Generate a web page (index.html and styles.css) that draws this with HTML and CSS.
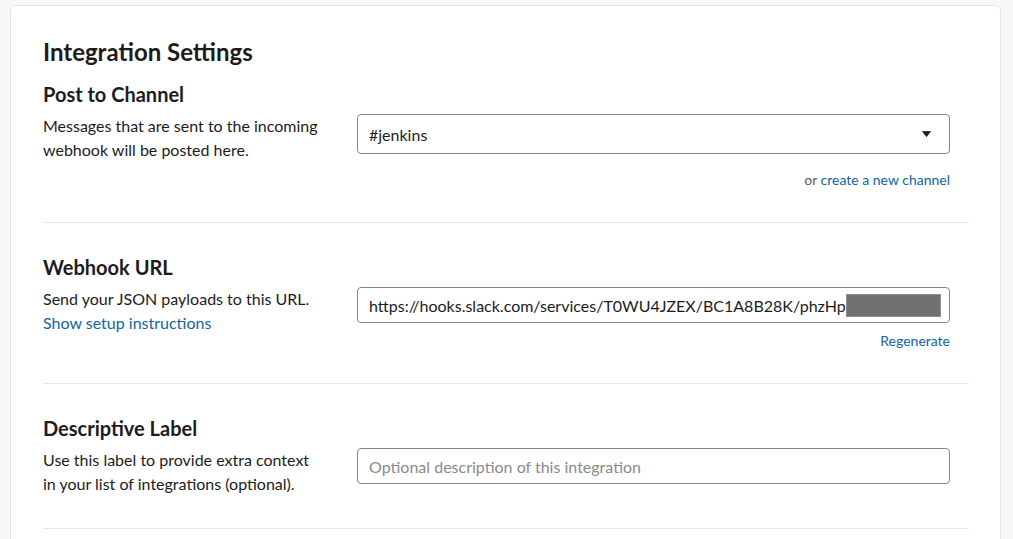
FILE: index.html
```html
<!DOCTYPE html>
<html>
<head>
<meta charset="utf-8">
<link rel="stylesheet" href="styles.css">
</head>
<body>
<div class="card">
  <h1 class="title">Integration Settings</h1>

  <section class="section first">
    <h2 class="label">Post to Channel</h2>
    <div class="row">
      <p class="desc">Messages that are sent to the incoming webhook will be posted here.</p>
      <div class="control">
        <div class="field select">
          <span>#jenkins</span>
          <svg class="caret" width="9" height="6" viewBox="0 0 9 6"><path d="M0.3 0.3H8.7L4.5 5.7Z" fill="#1d1c1d" stroke="#1d1c1d" stroke-width="0.6" stroke-linejoin="round"/></svg>
        </div>
        <div class="helper helper-select">or <a href="#">create a new channel</a></div>
      </div>
    </div>
  </section>

  <section class="section">
    <h2 class="label">Webhook URL</h2>
    <div class="row">
      <p class="desc">Send your JSON payloads to this URL.<br><a href="#">Show setup instructions</a></p>
      <div class="control">
        <div class="field url"><span>https://hooks.slack.com/services/T0WU4JZEX/BC1A8B28K/phzHp</span><span class="redact"></span></div>
        <div class="helper helper-url"><a href="#">Regenerate</a></div>
      </div>
    </div>
  </section>

  <section class="section">
    <h2 class="label">Descriptive Label</h2>
    <div class="row">
      <p class="desc">Use this label to provide extra context in your list of integrations (optional).</p>
      <div class="control">
        <div class="field text placeholder">Optional description of this integration</div>
      </div>
    </div>
  </section>
</div>
</body>
</html>
```

FILE: styles.css
```css
html, body {
  margin: 0;
  padding: 0;
  background: #f8f8f8;
  font-family: Lato, "Open Sans", sans-serif;
  color: #1d1c1d;
}

body {
  padding: 5px 12px 0 10px;
  height: 539px;
  box-sizing: border-box;
  overflow: hidden;
}

a {
  color: #1264a3;
  text-decoration: none;
}

.card {
  background: #fff;
  border: 1px solid #e5e5e5;
  border-radius: 6px;
  padding: 30px 31px 0 32px;
  height: 560px;
  box-sizing: border-box;
}

.title {
  margin: 0;
  font-size: 24px;
  line-height: 31px;
  font-weight: 700;
}

.section {
  padding: 32px 0 33px;
  border-bottom: 1px solid #e6e6e6;
}

.section.first {
  padding-top: 15px;
}

.label {
  margin: 0;
  font-size: 20px;
  line-height: 24px;
  font-weight: 700;
}

.row {
  display: grid;
  grid-template-columns: 314px minmax(0, 1fr);
  margin-top: 8px;
  padding-right: 19px;
}

.desc {
  margin: 0;
  font-size: 16px;
  line-height: 23.5px;
  padding-right: 34px;
}

.control {
  display: flex;
  flex-direction: column;
  min-width: 0;
}

.field {
  border: 1px solid #868686;
  border-radius: 4px;
  font-size: 16px;
  display: flex;
  align-items: center;
  padding: 0 11px;
  box-sizing: border-box;
  white-space: nowrap;
  overflow: hidden;
  min-width: 0;
}

.select {
  height: 40px;
  justify-content: space-between;
  padding-right: 18px;
}

.url, .text {
  height: 36px;
}

.redact {
  display: inline-block;
  width: 95px;
  height: 23px;
  background: #717171;
  border: 1px solid #8e8e8e;
  box-sizing: border-box;
  flex: none;
}

.placeholder {
  color: #8a8a8a;
}

.helper {
  text-align: right;
  font-size: 14px;
  line-height: 18px;
  color: #616061;
}

.helper-select {
  margin-top: 17px;
}

.helper-url {
  margin-top: 9px;
}
```
